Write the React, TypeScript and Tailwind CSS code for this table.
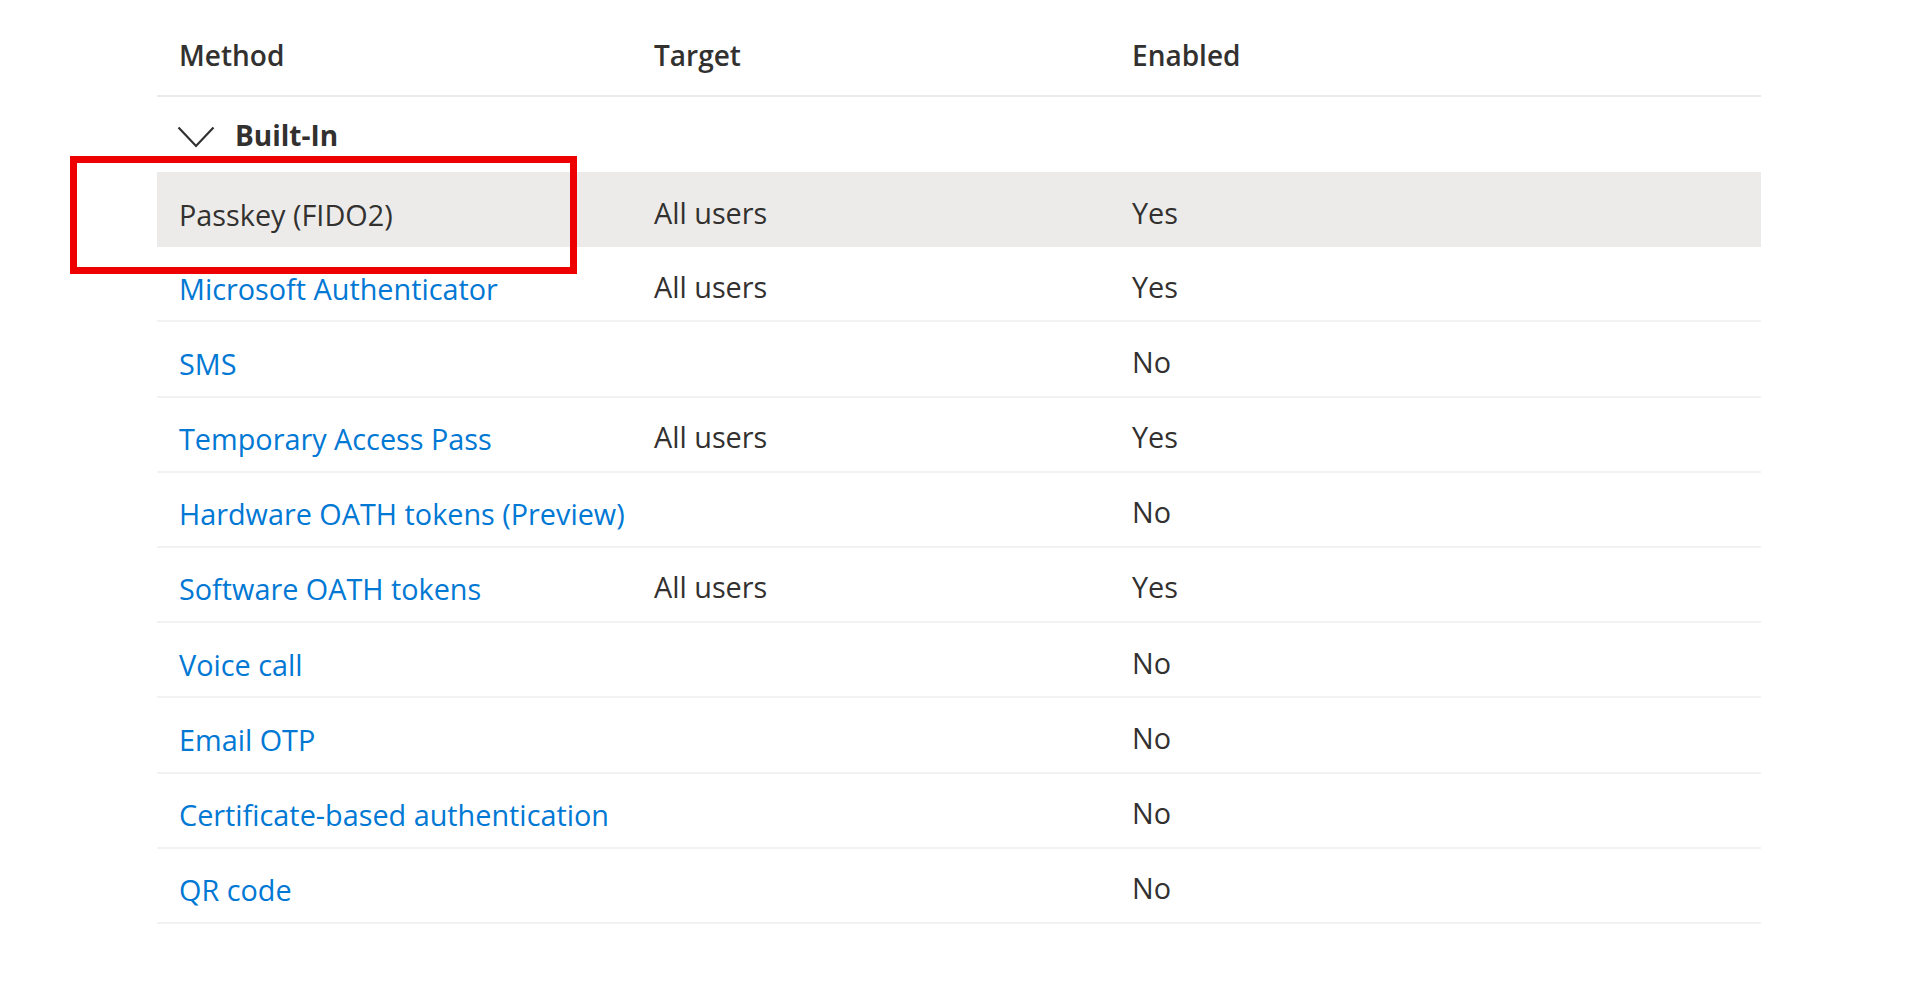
import React from "react";

type Row = { method: string; target: string; enabled: string; selected?: boolean };

const rows: Row[] = [
  { method: "Passkey (FIDO2)", target: "All users", enabled: "Yes", selected: true },
  { method: "Microsoft Authenticator", target: "All users", enabled: "Yes" },
  { method: "SMS", target: "", enabled: "No" },
  { method: "Temporary Access Pass", target: "All users", enabled: "Yes" },
  { method: "Hardware OATH tokens (Preview)", target: "", enabled: "No" },
  { method: "Software OATH tokens", target: "All users", enabled: "Yes" },
  { method: "Voice call", target: "", enabled: "No" },
  { method: "Email OTP", target: "", enabled: "No" },
  { method: "Certificate-based authentication", target: "", enabled: "No" },
  { method: "QR code", target: "", enabled: "No" },
];

export default function App() {
  return (
    <div
      className="relative w-[1920px] h-[1006px] bg-white overflow-hidden text-[#323130]"
      style={{ fontFamily: '"Open Sans", "Noto Sans", sans-serif' }}
    >
      <div className="ml-[157px] w-[1604px] text-[28.8px]">
        {/* Header */}
        <div className="grid grid-cols-[475px_478px_1fr] h-[97px] border-b-2 border-[#edebe9] items-center font-semibold pt-[14px] text-[28px]">
          <div className="pl-[22px]">Method</div>
          <div className="pl-[22px]">Target</div>
          <div className="pl-[22px]">Enabled</div>
        </div>
        {/* Group */}
        <div className="flex items-center h-[75px] pl-[20px] gap-[20px]">
          <svg width="38" height="22" viewBox="0 0 38 22" className="mt-[4px]">
            <polyline points="1.5,1.5 19,20 36.5,1.5" fill="none" stroke="#323130" strokeWidth="2.2" />
          </svg>
          <span className="font-bold text-[28px]">Built-In</span>
        </div>
        {/* Rows */}
        {rows.map((r) => (
          <div
            key={r.method}
            className={
              r.selected
                ? "grid grid-cols-[475px_478px_1fr] h-[75.2px] items-center bg-[#edebe9] pt-[9px]"
                : "grid grid-cols-[475px_478px_1fr] h-[75.2px] items-center border-b-2 border-[#f3f2f1] pt-[9px]"
            }
          >
            <div className={r.selected ? "pl-[22px] text-[#323130]" : "pl-[22px] text-[#0078d4]"}>{r.method}</div>
            <div className="pl-[22px] -mt-[4px]">{r.target}</div>
            <div className="pl-[22px] -mt-[4px]">{r.enabled}</div>
          </div>
        ))}
      </div>
      {/* Red highlight annotation */}
      <div className="absolute left-[70px] top-[156px] w-[507px] h-[118px] border-[7px] border-[#ee0000]" />
    </div>
  );
}
